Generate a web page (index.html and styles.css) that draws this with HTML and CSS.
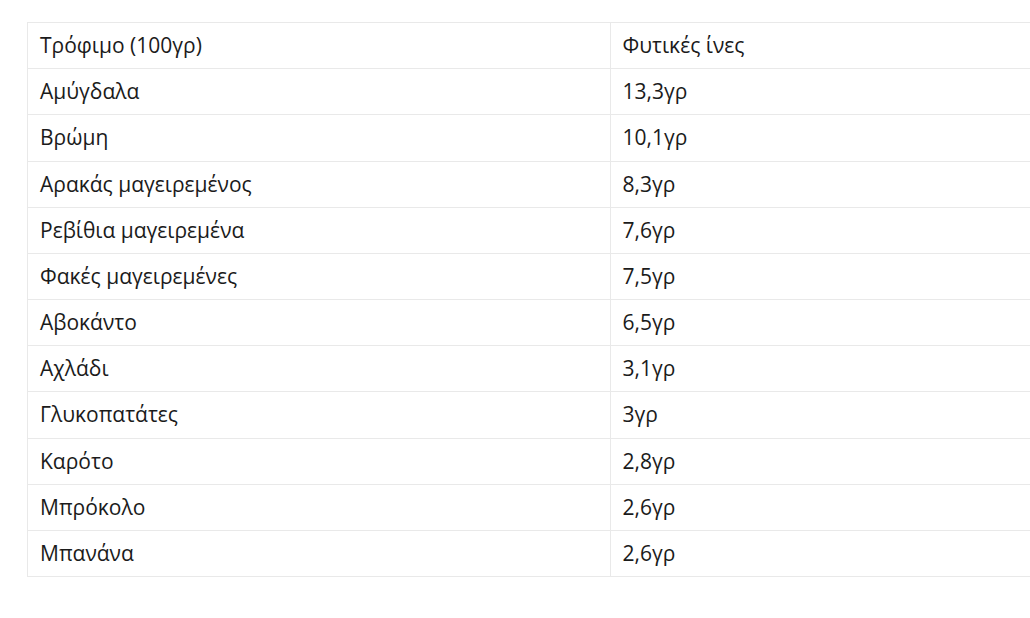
FILE: index.html
```html
<!DOCTYPE html>
<html lang="el">
<head>
<meta charset="utf-8">
<link rel="stylesheet" href="styles.css">
</head>
<body>
<div class="page">
<table class="fiber">
<tbody>
<tr><td>Τρόφιμο (100γρ)</td><td>Φυτικές ίνες</td></tr>
<tr><td>Αμύγδαλα</td><td>13,3γρ</td></tr>
<tr><td>Βρώμη</td><td>10,1γρ</td></tr>
<tr><td>Αρακάς μαγειρεμένος</td><td>8,3γρ</td></tr>
<tr><td>Ρεβίθια μαγειρεμένα</td><td>7,6γρ</td></tr>
<tr><td>Φακές μαγειρεμένες</td><td>7,5γρ</td></tr>
<tr><td>Αβοκάντο</td><td>6,5γρ</td></tr>
<tr><td>Αχλάδι</td><td>3,1γρ</td></tr>
<tr><td>Γλυκοπατάτες</td><td>3γρ</td></tr>
<tr><td>Καρότο</td><td>2,8γρ</td></tr>
<tr><td>Μπρόκολο</td><td>2,6γρ</td></tr>
<tr><td>Μπανάνα</td><td>2,6γρ</td></tr>
</tbody>
</table>
</div>
</body>
</html>
```
FILE: styles.css
```css
html, body {
  margin: 0;
  padding: 0;
  background: #fff;
  overflow: hidden;
}
.page {
  width: 1030px;
  height: 618px;
  overflow: hidden;
  box-sizing: border-box;
  padding: 22px 0 0 27px;
  font-family: "Open Sans", "Noto Sans", sans-serif;
  color: #1b1b1b;
}
.fiber {
  border-collapse: collapse;
  width: 1166px;
  table-layout: fixed;
}
.fiber td {
  width: 50%;
  border: 1px solid #e9e9e9;
  padding: 10px 12px;
  font-size: 21px;
  line-height: 25.17px;
  text-align: left;
  vertical-align: middle;
}
```
